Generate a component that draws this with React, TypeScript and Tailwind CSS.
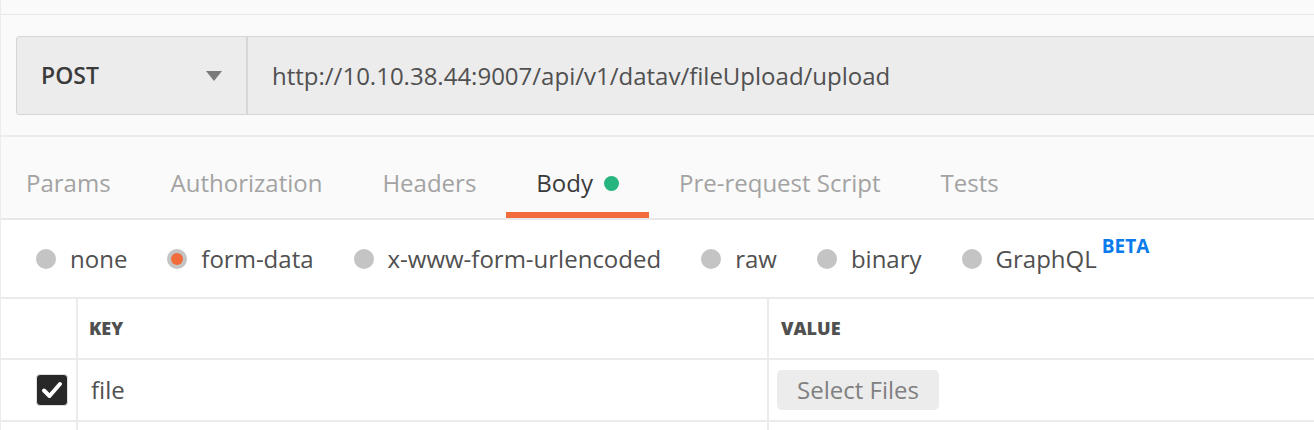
import React from "react";

const tabs = ["Params", "Authorization", "Headers", "Body", "Pre-request Script", "Tests"];

const bodyTypes = ["none", "form-data", "x-www-form-urlencoded", "raw", "binary", "GraphQL"];

const RequestBar: React.FC = () => (
    <div className="border-b-2 border-[#ebebeb] bg-[#fafafa] pl-[15px] pt-[21px] pb-5">
        <div className="-mr-6 flex h-[79px] rounded-[3px] border border-[#d6d6d6] bg-[#ececec]">
            <div className="flex w-[231px] shrink-0 items-center justify-between border-r-2 border-[#d6d6d6] pl-6 pr-6">
                <span className="text-[23px] font-semibold text-[#3a3a3a]">POST</span>
                <svg width="16" height="10" viewBox="0 0 16 10">
                    <path d="M0 0h16L8 10z" fill="#7a7a7a" />
                </svg>
            </div>
            <div className="flex flex-1 items-center pl-6 text-[24px] text-[#505050]">
                http://10.10.38.44:9007/api/v1/datav/fileUpload/upload
            </div>
        </div>
    </div>
);

const Tabs: React.FC = () => (
    <div className="flex h-[83px] border-b-2 border-[#e8e8e8] bg-[#fafafa]">
        <div className="-ml-[5px] flex">
            {tabs.map((t) => {
                const active = t === "Body";
                return (
                    <div
                        key={t}
                        className={`flex items-center border-b-[6px] px-[30px] pt-[17px] text-[24px] ${
                            active ? "border-[#f26b3a] text-[#3a3a3a]" : "border-transparent text-[#a3a3a3]"
                        }`}
                    >
                        {t}
                        {active && <span className="ml-[11px] h-[15px] w-[15px] rounded-full bg-[#26b57f]" />}
                    </div>
                );
            })}
        </div>
    </div>
);

const BodyTypes: React.FC = () => (
    <div className="flex h-[77px] items-center gap-[40px] bg-white pl-[35px] text-[24px] text-[#505050]">
        {bodyTypes.map((b) => (
            <div key={b} className="flex items-center">
                {b === "form-data" ? (
                    <span className="flex h-5 w-5 items-center justify-center rounded-full bg-[#c4c4c4]">
                        <span className="h-[12px] w-[12px] rounded-full bg-[#f26b3a]" />
                    </span>
                ) : (
                    <span className="h-5 w-5 rounded-full bg-[#c4c4c4]" />
                )}
                <span className="ml-[14px]">{b}</span>
                {b === "GraphQL" && (
                    <span className="-mt-6 ml-[5px] text-[19px] font-bold text-[#097bed]">BETA</span>
                )}
            </div>
        ))}
    </div>
);

const ParamsTable: React.FC = () => (
    <div className="border-t-2 border-[#ebebeb] bg-white text-[#505050]">
        <div className="flex h-[61px] border-b-2 border-[#ebebeb]">
            <div className="w-[77px] shrink-0 border-r-2 border-[#ebebeb]" />
            <div className="flex w-[691px] shrink-0 items-center border-r-2 border-[#ebebeb] pl-[11px] text-[18px] font-extrabold">
                KEY
            </div>
            <div className="flex flex-1 items-center pl-[12px] text-[18px] font-extrabold">VALUE</div>
        </div>
        <div className="flex h-[62px] border-b-2 border-[#ebebeb]">
            <div className="flex w-[77px] shrink-0 items-center border-r-2 border-[#ebebeb] pl-[35px]">
                <span className="flex h-[32px] w-[32px] items-center justify-center rounded-[4px] border border-[#e0e0e0] bg-[#282828]">
                    <svg width="22" height="18" viewBox="0 0 22 18">
                        <path d="M3 9.5l5.5 5.5L19 3" fill="none" stroke="#fff" strokeWidth="4" strokeLinecap="round" strokeLinejoin="round" />
                    </svg>
                </span>
            </div>
            <div className="flex w-[691px] shrink-0 items-center border-r-2 border-[#ebebeb] pl-[13px] text-[24px]">
                file
            </div>
            <div className="flex flex-1 items-center pl-[8px]">
                <button className="h-[40px] w-[162px] rounded-[5px] bg-[#ececec] text-[24px] text-[#808080]">
                    Select Files
                </button>
            </div>
        </div>
        <div className="flex h-[20px]">
            <div className="w-[77px] shrink-0 border-r-2 border-[#ebebeb]" />
            <div className="w-[691px] shrink-0 border-r-2 border-[#ebebeb]" />
        </div>
    </div>
);

const App: React.FC = () => {
    return (
        <div className="h-[430px] w-full overflow-hidden border-l border-[#ececec] bg-white font-['Open_Sans',sans-serif]">
            <div className="h-[15px] border-b border-[#e8e8e8] bg-[#fafafa]" />
            <RequestBar />
            <Tabs />
            <BodyTypes />
            <ParamsTable />
        </div>
    );
};

export default App;
